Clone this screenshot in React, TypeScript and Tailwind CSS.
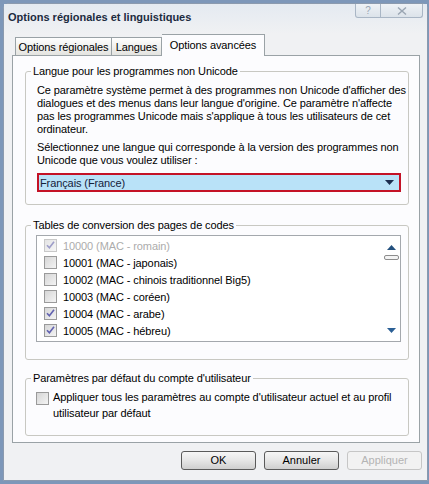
import React from 'react';

const font = { fontFamily: '"Liberation Sans", Arial, sans-serif' };

type Row = { code: string; label: string; checked: boolean; disabled?: boolean };

const rows: Row[] = [
  { code: '10000', label: '(MAC - romain)', checked: true, disabled: true },
  { code: '10001', label: '(MAC - japonais)', checked: false },
  { code: '10002', label: '(MAC - chinois traditionnel Big5)', checked: false },
  { code: '10003', label: '(MAC - coréen)', checked: false },
  { code: '10004', label: '(MAC - arabe)', checked: true },
  { code: '10005', label: '(MAC - hébreu)', checked: true },
];

function CheckBox({ checked, disabled }: { checked: boolean; disabled?: boolean }) {
  return (
    <span
      className={`flex h-[13px] w-[13px] shrink-0 items-center justify-center border bg-gradient-to-br ${
        disabled ? 'border-[#c8c8c8] from-[#e4e4e4] to-[#f6f6f6]' : 'border-[#9a9a9a] from-[#d6d6d6] to-[#f4f4f4]'
      }`}
    >
      {checked && (
        <svg width="9" height="9" viewBox="0 0 9 9">
          <path
            d="M1 4.2 L3.4 6.8 L8 0.8"
            fill="none"
            stroke={disabled ? '#9d9dc8' : '#6262b0'}
            strokeWidth="1.6"
          />
        </svg>
      )}
    </span>
  );
}

function GroupBox({ title, className, children }: { title: string; className?: string; children: React.ReactNode }) {
  return (
    <fieldset className={`w-[384px] min-w-0 shrink-0 rounded-[3px] border border-[#c8c8c2] ${className ?? ''}`}>
      <legend className="ml-[5px] px-[2px] leading-[13px] text-black">{title}</legend>
      {children}
    </fieldset>
  );
}

function DlgButton({ label, disabled }: { label: string; disabled?: boolean }) {
  return (
    <button
      type="button"
      className={`h-[19px] w-[75px] rounded-[3px] border text-[11px] leading-[17px] ${
        disabled
          ? 'border-[#c6c6c6] bg-[#f2f2f2] text-[#b4b4b4]'
          : 'border-[#5a5a5a] bg-gradient-to-b from-[#f6f6f6] via-[#e6e6e6] to-[#cfcfcf] text-black'
      }`}
    >
      {label}
    </button>
  );
}

export default function App() {
  return (
    <div className="h-[484px] w-[429px] overflow-hidden whitespace-nowrap bg-[#7d97b9] pl-[3px] pt-[3px]" style={font}>
      <div className="flex h-[478px] w-[425px] flex-col rounded-t-[6px] border border-[#8b9aae] bg-[#f0f1f3]">
        {/* title bar */}
        <div className="flex h-[30px] shrink-0 items-start bg-gradient-to-b from-[#e4eaf1] to-[#f0f1f3]">
          <div className="pl-[4px] pt-[6px] text-[11px] font-bold leading-[14px] text-[#1c2b40]">
            Options régionales et linguistiques
          </div>
          <div className="ml-auto mr-[4px] flex">
            <div className="flex h-[14px] w-[26px] items-center justify-center rounded-bl-[3px] border border-t-0 border-[#a9b6c5] bg-gradient-to-b from-[#eef2f6] to-[#dce3ea] text-[10px] leading-[10px] text-[#9aa6b3]">
              ?
            </div>
            <div className="flex h-[14px] w-[42px] items-center justify-center rounded-br-[3px] border border-l-0 border-t-0 border-[#a9b6c5] bg-gradient-to-b from-[#eef2f6] to-[#dce3ea]">
              <svg width="10" height="8" viewBox="0 0 10 8">
                <path d="M1 0.5 L9 7.5 M9 0.5 L1 7.5" stroke="#9aa6b3" strokeWidth="1.4" />
              </svg>
            </div>
          </div>
        </div>

        {/* tabs */}
        <div className="relative z-10 -mb-px ml-[8px] flex h-[22px] shrink-0 items-end pl-[3px] text-[11px] tracking-[-0.1px] text-black">
          <div className="mb-px flex h-[18px] w-[97px] items-center justify-center border border-b-0 border-[#9aa2a6] bg-gradient-to-b from-[#fefefe] to-[#e4e4e0] leading-[14px]">
            Options régionales
          </div>
          <div className="mb-px flex h-[18px] w-[50px] items-center justify-center border border-b-0 border-l-0 border-[#9aa2a6] bg-gradient-to-b from-[#fefefe] to-[#e4e4e0] leading-[14px]">
            Langues
          </div>
          <div className="flex h-[22px] w-[103px] items-start justify-center border border-b-0 border-l-0 border-[#9aa2a6] bg-[#fcfcfe] pt-[3px] leading-[14px]">
            Options avancées
          </div>
        </div>

        {/* panel */}
        <div className="ml-[8px] flex h-[388px] w-[408px] shrink-0 flex-col border border-[#9aa2a6] bg-[#fcfcfe] px-[12px] text-[11px] tracking-[-0.1px] text-black">
          <GroupBox title="Langue pour les programmes non Unicode" className="mt-[9px]">
            <div className="px-[11px] pb-[12px] pt-[6px]">
              <p className="leading-[13px]">
                Ce paramètre système permet à des programmes non Unicode d'afficher des
                <br />
                dialogues et des menus dans leur langue d'origine. Ce paramètre n'affecte
                <br />
                pas les programmes Unicode mais s'applique à tous les utilisateurs de cet
                <br />
                ordinateur.
              </p>
              <p className="mt-[5px] leading-[13px]">
                Sélectionnez une langue qui corresponde à la version des programmes non
                <br />
                Unicode que vous voulez utiliser :
              </p>
              <div className="mt-[6px] flex h-[19px] w-[364px] items-center border-2 border-[#c41226] bg-[#b9e2f8] pl-[1px] pr-[5px]">
                <span className="leading-[14px] text-[#14213a]">Français (France)</span>
                <svg className="ml-auto" width="9" height="5" viewBox="0 0 9 5">
                  <path d="M0 0 H9 L4.5 5 Z" fill="#1b2d4f" />
                </svg>
              </div>
            </div>
          </GroupBox>

          <GroupBox title="Tables de conversion des pages de codes" className="mt-[14px]">
            <div className="pb-[17px] pl-[10px] pt-[3px]">
              <div className="flex h-[107px] w-[365px] border border-[#a4a8ad] bg-white">
                <div className="flex-1 pl-[7px] pt-[1px]">
                  {rows.map((r) => (
                    <div key={r.code} className="flex h-[17px] items-center gap-[6px]">
                      <CheckBox checked={r.checked} disabled={r.disabled} />
                      <span className={`leading-[14px] ${r.disabled ? 'text-[#acacac]' : 'text-black'}`}>
                        {r.code} {r.label}
                      </span>
                    </div>
                  ))}
                </div>
                <div className="flex w-[18px] flex-col items-center pb-[8px] pt-[9px]">
                  <svg width="9" height="5" viewBox="0 0 9 5">
                    <path d="M0 5 H9 L4.5 0 Z" fill="#23507e" />
                  </svg>
                  <div className="mt-[5px] h-[5px] w-[15px] rounded-[2px] border border-[#8d8d8d] bg-[#f4f4f4]" />
                  <svg className="mt-auto" width="9" height="5" viewBox="0 0 9 5">
                    <path d="M0 0 H9 L4.5 5 Z" fill="#2a5f95" />
                  </svg>
                </div>
              </div>
            </div>
          </GroupBox>

          <GroupBox title="Paramètres par défaut du compte d'utilisateur" className="mt-[12px]">
            <div className="flex gap-[4px] pb-[14px] pl-[10px] pt-[4px]">
              <div className="pt-[3px]">
                <CheckBox checked={false} />
              </div>
              <p className="leading-[16px]">
                Appliquer tous les paramètres au compte d'utilisateur actuel et au profil
                <br />
                utilisateur par défaut
              </p>
            </div>
          </GroupBox>
        </div>

        {/* buttons */}
        <div className="mt-[8px] flex shrink-0 justify-end gap-[8px] pr-[5px]">
          <DlgButton label="OK" />
          <DlgButton label="Annuler" />
          <DlgButton label="Appliquer" disabled />
        </div>
      </div>
    </div>
  );
}
